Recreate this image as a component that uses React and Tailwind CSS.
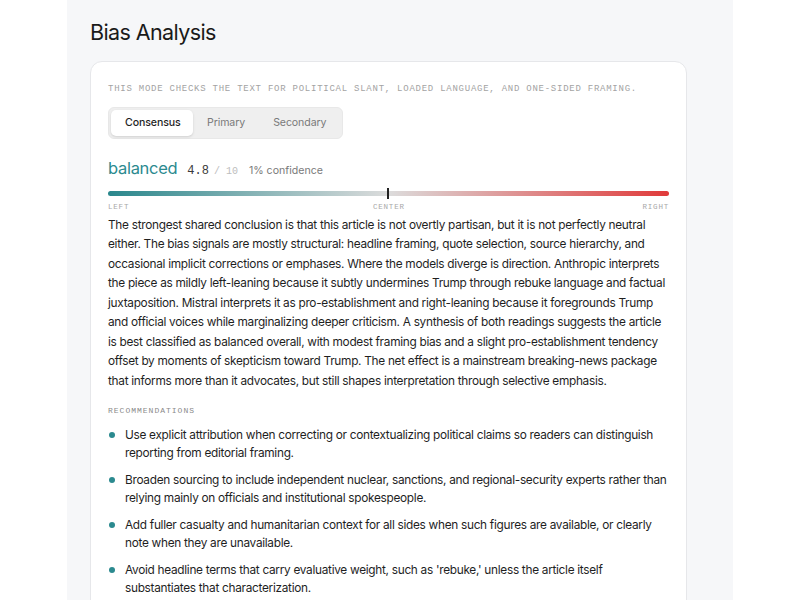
import React, { useState } from 'react';

const SANS = { fontFamily: "Inter, 'Liberation Sans', sans-serif" };
const MONO = { fontFamily: "'Liberation Mono', 'DejaVu Sans Mono', monospace" };

const tabs = ['Consensus', 'Primary', 'Secondary'];

const recommendations = [
  'Use explicit attribution when correcting or contextualizing political claims so readers can distinguish reporting from editorial framing.',
  'Broaden sourcing to include independent nuclear, sanctions, and regional-security experts rather than relying mainly on officials and institutional spokespeople.',
  'Add fuller casualty and humanitarian context for all sides when such figures are available, or clearly note when they are unavailable.',
  "Avoid headline terms that carry evaluative weight, such as 'rebuke,' unless the article itself substantiates that characterization.",
];

const App = () => {
  const [active, setActive] = useState('Consensus');
  const score = 4.8;

  return (
    <div className="min-h-screen bg-white flex justify-center text-[#1f1f1f]" style={SANS}>
      <div className="w-[666px] bg-[#f6f7f9] px-[23px] pt-[17px] pb-10">
        <h1 className="text-[21.5px] leading-[30px] tracking-[-0.6px] text-[#1a1a1a]">Bias Analysis</h1>

        <section className="mt-[14px] w-[597px] bg-white rounded-[12px] border border-[#e6e7ea] px-[17px] pt-[21px] pb-8">
          <p className="text-[9px] leading-[12px] tracking-[0.75px] uppercase text-[#a3a3a3]" style={MONO}>
            This mode checks the text for political slant, loaded language, and one-sided framing.
          </p>

          <div className="mt-[12px] inline-flex p-[2px] rounded-[6px] bg-[#efefef] border border-[#e8e8e8]">
            {tabs.map(t => (
              <button
                key={t}
                onClick={() => setActive(t)}
                className={`h-[26px] px-[14px] rounded-[5px] text-[10.6px] tracking-[-0.1px] ${active === t ? 'bg-white text-[#1f1f1f] font-medium shadow-sm w-[82px]' : 'text-[#7a7a7a]'}`}
              >
                {t}
              </button>
            ))}
          </div>

          <div className="mt-[17px] flex items-baseline">
            <span className="text-[16.5px] text-[#2b8a8f] tracking-[-0.3px]">balanced</span>
            <span className="ml-[10px] text-[12px] text-[#3a3a3a]" style={MONO}>{score}</span>
            <span className="ml-[5px] text-[10px] text-[#bdbdbd]" style={MONO}>/ 10</span>
            <span className="ml-[11px] text-[10.6px] text-[#7a7a7a]">1% confidence</span>
          </div>

          <div className="mt-[10px] relative h-[5px] rounded-full bg-[linear-gradient(to_right,#2a878c,#dcdcdc_50%,#e03a3a)]">
            <div className="absolute left-[279px] top-[-3px] w-[2px] h-[11px] bg-[#222]" />
          </div>
          <div className="mt-[7px] flex justify-between text-[7.5px] leading-[9px] tracking-[0.8px] text-[#a8a8a8]" style={MONO}>
            <span>LEFT</span>
            <span className="pl-[6px]">CENTER</span>
            <span>RIGHT</span>
          </div>

          <p className="mt-[4px] text-[11.85px] leading-[19.5px] tracking-[-0.3px] text-[#1f1f1f]">
            The strongest shared conclusion is that this article is not overtly partisan, but it is not perfectly neutral either. The bias signals are mostly structural: headline framing, quote selection, source hierarchy, and occasional implicit corrections or emphases. Where the models diverge is direction. Anthropic interprets the piece as mildly left-leaning because it subtly undermines Trump through rebuke language and factual juxtaposition. Mistral interprets it as pro-establishment and right-leaning because it foregrounds Trump and official voices while marginalizing deeper criticism. A synthesis of both readings suggests the article is best classified as balanced overall, with modest framing bias and a slight pro-establishment tendency offset by moments of skepticism toward Trump. The net effect is a mainstream breaking-news package that informs more than it advocates, but still shapes interpretation through selective emphasis.
          </p>

          <h4 className="mt-[15px] text-[8px] leading-[10px] tracking-[1px] text-[#8a8a8a]" style={MONO}>RECOMMENDATIONS</h4>

          <ul className="mt-[10px] space-y-[9px]">
            {recommendations.map((r, i) => (
              <li key={i} className="flex text-[11.85px] leading-[18px] tracking-[-0.3px] text-[#1f1f1f]">
                <span className="mt-[6px] ml-[1px] mr-[10px] w-[6px] h-[6px] rounded-full bg-[#2b8a8f] shrink-0" />
                <span>{r}</span>
              </li>
            ))}
          </ul>
        </section>
      </div>
    </div>
  );
};

export default App;
